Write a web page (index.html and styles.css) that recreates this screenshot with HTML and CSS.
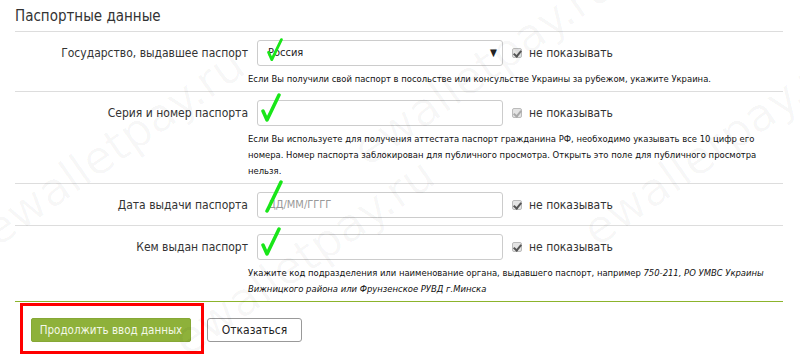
FILE: index.html
```html
<!DOCTYPE html>
<html lang="ru">
<head>
    <meta charset="UTF-8">
    <title>Паспортные данные</title>
    <link rel="stylesheet" href="styles.css">
</head>
<body>
    <div class="page">
        <h2 class="title">Паспортные данные</h2>

        <div class="row">
            <label class="label">Государство, выдавшее паспорт</label>
            <div class="control">
                <div class="field select">
                    <span>Россия</span>
                    <span class="arrow">▼</span>
                </div>
                <span class="check"></span>
                <span class="hide-text">не показывать</span>
            </div>
            <p class="help">Если Вы получили свой паспорт в посольстве или консульстве Украины за рубежом, укажите Украина.</p>
            <svg class="tick tick-1" viewBox="0 0 20 30"><path d="M2 18 L6 27 L18 2"/></svg>
        </div>

        <div class="row">
            <label class="label">Серия и номер паспорта</label>
            <div class="control">
                <div class="field"></div>
                <span class="check light"></span>
                <span class="hide-text">не показывать</span>
            </div>
            <p class="help">Если Вы используете для получения аттестата паспорт гражданина РФ, необходимо указывать все 10 цифр его номера. Номер паспорта заблокирован для публичного просмотра. Открыть это поле для публичного просмотра нельзя.</p>
            <svg class="tick tick-2" viewBox="0 0 20 30"><path d="M2 18 L6 27 L18 2"/></svg>
        </div>

        <div class="row no-help">
            <label class="label">Дата выдачи паспорта</label>
            <div class="control">
                <div class="field placeholder">ДД/ММ/ГГГГ</div>
                <span class="check"></span>
                <span class="hide-text">не показывать</span>
            </div>
            <svg class="tick tick-3" viewBox="0 0 20 30"><path d="M3 30 L5 26 L17 1"/></svg>
        </div>

        <div class="row last">
            <label class="label">Кем выдан паспорт</label>
            <div class="control">
                <div class="field"></div>
                <span class="check"></span>
                <span class="hide-text">не показывать</span>
            </div>
            <p class="help">Укажите код подразделения или наименование органа, выдавшего паспорт, например <i>750-211, РО УМВС Украины Вижницкого района или Фрунзенское РУВД г.Минска</i></p>
            <svg class="tick tick-4" viewBox="0 0 20 30"><path d="M2 18 L6 27 L18 2"/></svg>
        </div>

        <div class="actions">
            <button class="btn btn-green">Продолжить ввод данных</button>
            <button class="btn btn-white">Отказаться</button>
            <div class="marker"></div>
        </div>

        <div class="wm wm-1">ewalletpay.ru</div>
        <div class="wm wm-2">ewalletpay.ru</div>
        <div class="wm wm-3">ewalletpay.ru</div>
        <div class="wm wm-4">ewalletpay.ru</div>
    </div>
</body>
</html>
```

FILE: styles.css
```css
body {
    margin: 0;
    background: #fff;
    font-family: Tahoma, "DejaVu Sans Condensed", "DejaVu Sans", sans-serif;
    color: #333;
    overflow: hidden;
}
.page {
    position: relative;
    width: 800px;
    height: 360px;
    padding: 0 17px 0 15px;
    box-sizing: border-box;
    overflow: hidden;
}
.title {
    margin: 0;
    padding: 7px 0 0;
    height: 24px;
    font-size: 15px;
    font-weight: normal;
    color: #333;
    border-bottom: 1px solid #ddd;
}
.row {
    position: relative;
    display: grid;
    grid-template-columns: 233px 1fr;
    padding: 8px 0 4px;
    border-bottom: 1px solid #ddd;
}
.row.no-help {
    padding-bottom: 7px;
}
.row.last {
    border-bottom-color: #8cb42c;
}
.label {
    font-size: 12px;
    text-align: right;
    line-height: 26px;
}
.control {
    display: flex;
    align-items: center;
    margin-left: 9px;
}
.field {
    width: 246px;
    height: 26px;
    box-sizing: border-box;
    border: 1px solid #ccc;
    border-radius: 3px;
    background: #fff;
    font-size: 11px;
    line-height: 24px;
    padding-left: 10px;
    color: #222;
}
.select {
    display: flex;
    justify-content: space-between;
    padding-right: 5px;
}
.arrow {
    font-size: 10px;
}
.placeholder {
    color: #999;
}
.check {
    width: 10px;
    height: 10px;
    margin-left: 9px;
    border: 1px solid #bbb;
    border-radius: 2px;
    background: #e4e4e4;
    position: relative;
    box-sizing: border-box;
}
.check::after {
    content: "";
    position: absolute;
    left: 2px;
    top: 0;
    width: 3px;
    height: 6px;
    border: solid #555;
    border-width: 0 2px 2px 0;
    transform: rotate(40deg);
}
.check.light::after {
    border-color: #aaa;
}
.hide-text {
    font-size: 12px;
    margin-left: 7px;
}
.help {
    grid-column: 2;
    margin: 5px 0 0;
    padding-right: 12px;
    font-size: 9.4px;
    line-height: 16px;
    color: #111;
}
.actions {
    position: relative;
    display: flex;
    gap: 16px;
    padding: 16px 0 0 16px;
}
.btn {
    font-family: Tahoma, "DejaVu Sans Condensed", "DejaVu Sans", sans-serif;
    font-size: 11.5px;
    height: 24px;
    border-radius: 2px;
    white-space: nowrap;
    padding: 0;
    cursor: pointer;
}
.btn-green {
    width: 160px;
    background: #8eb13a;
    border: 1px solid #86a836;
    color: #f4f8e8;
}
.btn-white {
    width: 95px;
    background: #fff;
    border: 1px solid #999;
    color: #222;
    border-radius: 3px;
    font-size: 12px;
}
.marker {
    position: absolute;
    left: 5px;
    top: 1px;
    width: 184px;
    height: 51px;
    box-sizing: border-box;
    border: 3px solid #f00;
}
.tick {
    position: absolute;
    width: 20px;
    height: 30px;
    fill: none;
    stroke: #19e619;
    stroke-width: 3.5;
    stroke-linecap: round;
    stroke-linejoin: round;
}
.tick-1 { left: 252px; top: 5px; width: 16px; height: 26px; }
.tick-2 { left: 246px; top: 1px; }
.tick-3 { left: 249px; top: -5px; height: 34px; }
.tick-4 { left: 246px; top: 1px; }
.wm {
    position: absolute;
    font-family: "DejaVu Sans", sans-serif;
    font-size: 46px;
    color: rgba(0, 0, 0, 0.03);
    transform: rotate(-35deg);
    white-space: nowrap;
    pointer-events: none;
}
.wm-1 { left: -40px; top: 120px; }
.wm-2 { left: 330px; top: 40px; }
.wm-3 { left: 560px; top: 120px; }
.wm-4 { left: 150px; top: 230px; }
```
